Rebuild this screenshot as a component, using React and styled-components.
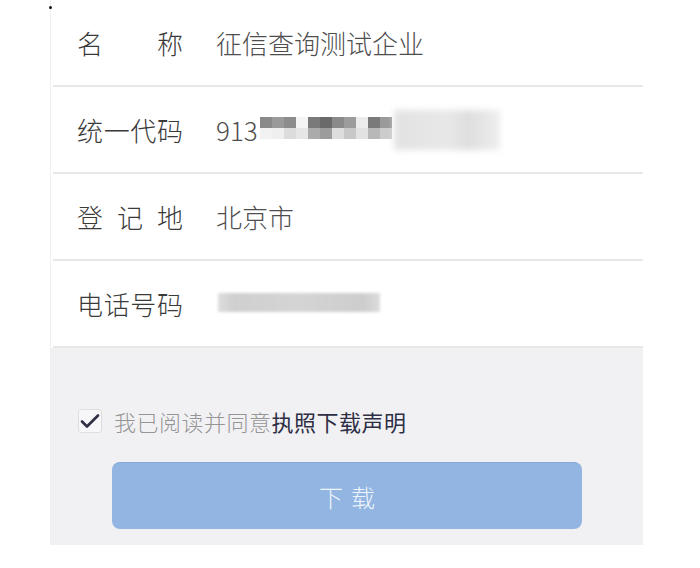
import React from "react";
import styled, { createGlobalStyle } from "styled-components";

const rows = [
  { label: "名称", value: "征信查询测试企业" },
  { label: "统一代码", value: "913", mosaic: true },
  { label: "登记地", value: "北京市" },
  { label: "电话号码", bar: true },
];

// pixelated blocks hiding the credit code (top row / bottom row)
const mosaicTop = ["#8a8a8a", "#9a9a9a", "#8c8c8c", "#f4f4f4", "#7a7a7a", "#6a6a6a", "#8a8a8a", "#9c9c9c", "#ececec", "#7a7a7a", "#9a9a9a"];
const mosaicBottom = ["#f2f2f2", "#efefef", "#dcdcdc", "#e6e6e6", "#ababab", "#9c9c9c", "#dddddd", "#c8c8c8", "#e2e2e2", "#b8b8b8", "#cccccc"];

function App() {
  return (
    <>
      <GlobalStyle />
      <Page>
        <Panel>
          {rows.map((row, index) => (
            <Row key={index}>
              <Label>
                {row.label.split("").map((ch, i) => (
                  <span key={i}>{ch}</span>
                ))}
              </Label>
              <Value>
                {row.value}
                {row.mosaic && (
                  <>
                    <Mosaic>
                      {mosaicTop.concat(mosaicBottom).map((c, i) => (
                        <Cell key={i} color={c} />
                      ))}
                    </Mosaic>
                    <Smudge />
                  </>
                )}
                {row.bar && <Bar />}
              </Value>
            </Row>
          ))}
          <Footer>
            <AgreeRow>
              <CheckBox>
                <svg width="20" height="16" viewBox="0 0 20 16">
                  <path d="M2 8.5 L7 13.5 L18 2.5" fill="none" stroke="#2f2f46" strokeWidth="2.6" strokeLinecap="round" strokeLinejoin="round" />
                </svg>
              </CheckBox>
              <AgreeText>
                我已阅读并同意<strong>执照下载声明</strong>
              </AgreeText>
            </AgreeRow>
            <DownloadButton>下载</DownloadButton>
          </Footer>
        </Panel>
      </Page>
    </>
  );
}

export default App;

const GlobalStyle = createGlobalStyle`
  body {
    margin: 0;
    background: #ffffff;
    font-family: "Noto Sans CJK SC", "Noto Sans", sans-serif;
  }
`;

const Page = styled.div`
  padding-left: 50px;
  width: 593px;
`;

const Panel = styled.div`
  position: relative;
  border-left: 1px solid #efefef;
  &::before {
    content: "";
    position: absolute;
    left: -2px;
    top: 6px;
    width: 3px;
    height: 3px;
    border-radius: 50%;
    background: #111;
  }
`;

const Row = styled.div`
  height: 85px;
  margin-left: 2px;
  border-bottom: 2px solid #e8e8e8;
  display: flex;
  align-items: center;
  padding-left: 24px;
`;

const Label = styled.div`
  width: 106px;
  display: flex;
  justify-content: space-between;
  font-size: 26px;
  font-weight: 300;
  color: #3a3a3a;
  line-height: 1;
`;

const Value = styled.div`
  margin-left: 33px;
  display: flex;
  align-items: center;
  font-size: 26px;
  font-weight: 300;
  color: #4e4e4e;
  line-height: 1;
`;

const Mosaic = styled.div`
  display: grid;
  grid-template-columns: repeat(11, 12px);
  grid-auto-rows: 11px;
  margin-left: 2px;
  margin-top: -4px;
  filter: blur(0.6px);
`;

const Cell = styled.div`
  background: ${(props) => props.color};
`;

const Smudge = styled.div`
  width: 106px;
  height: 40px;
  margin-left: 2px;
  background: linear-gradient(90deg, #e2e2e2, #e8e8e8 50%, #dedede 70%, #eeeeee);
  filter: blur(3px);
`;

const Bar = styled.div`
  width: 162px;
  height: 19px;
  margin-left: 2px;
  margin-top: -2px;
  background: linear-gradient(90deg, #dddddd, #cfcfcf 10%, #d4d4d4 50%, #cdcdcd 90%, #dcdcdc);
  filter: blur(1.5px);
`;

const Footer = styled.div`
  height: 197px;
  box-sizing: border-box;
  background: #f1f1f4;
  padding-top: 61px;
`;

const AgreeRow = styled.div`
  display: flex;
  align-items: center;
  padding-left: 27px;
  height: 24px;
`;

const CheckBox = styled.div`
  width: 24px;
  height: 24px;
  box-sizing: border-box;
  border: 1px solid #dedede;
  border-radius: 3px;
  background: #f7f7f9;
  display: flex;
  align-items: center;
  justify-content: center;
`;

const AgreeText = styled.span`
  margin-left: 12px;
  font-size: 22px;
  font-weight: 300;
  letter-spacing: 0.5px;
  color: #959595;
  strong {
    color: #2e2e44;
    font-weight: 400;
  }
`;

const DownloadButton = styled.button`
  display: block;
  margin: 29px 0 0 61px;
  width: 470px;
  height: 67px;
  border: none;
  border-top: 1px solid #84a8d8;
  border-radius: 8px;
  background: #92b5e1;
  color: #eef4fc;
  font-family: "Noto Sans CJK SC", "Noto Sans", sans-serif;
  font-size: 24px;
  font-weight: 300;
  letter-spacing: 8px;
  text-indent: 8px;
  cursor: pointer;
`;
